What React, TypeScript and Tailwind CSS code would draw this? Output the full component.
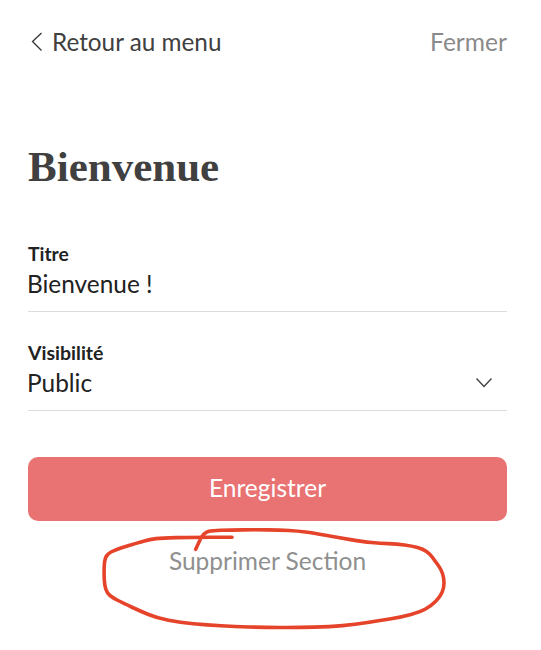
const scribble: [number, number][] = [
  [195.7, 549.3], [199, 542], [202, 536], [206, 532], [212, 530.5], [230, 530], [255, 529.7], [280, 530], [298, 531],
  [313, 533], [338, 537.5], [363, 541.7], [380, 543.2], [397, 544], [412, 546], [423, 549], [430, 554], [435, 561],
  [441, 569], [444, 578], [444, 588], [440, 597], [431, 606], [420, 612], [402, 617], [380, 620.5], [355, 624.5], [330, 626.7],
  [297, 627.6], [263, 627.4], [235, 626.5], [207, 625], [180, 622.5], [157, 618], [140, 611], [123, 603], [113, 598],
  [107, 593], [104.5, 585], [104, 573], [104.3, 561], [107, 554], [116, 549.5], [137, 543], [150, 539.5], [162, 537.8],
  [190, 537.4], [232, 537.2],
];

function smooth(points: [number, number][]) {
  let d = `M${points[0][0]} ${points[0][1]}`;
  for (let i = 1; i < points.length - 1; i++) {
    const [x, y] = points[i];
    const [nx, ny] = points[i + 1];
    d += ` Q${x} ${y} ${(x + nx) / 2} ${(y + ny) / 2}`;
  }
  const last = points[points.length - 1];
  return d + ` L${last[0]} ${last[1]}`;
}

export default function App() {
  return (
    <div className="relative w-[541px] h-[650px] overflow-hidden bg-white font-['Lato',sans-serif]">
      <div className="pl-7 pr-[34px] pt-[27px]">
        <div className="flex items-center justify-between h-[30px]">
          <div className="flex items-center">
            <svg width="14" height="20" viewBox="0 0 14 20" fill="none" className="ml-[2px] mr-[8px]">
              <path d="M11.5 1 L2.5 9.5 L11.5 18.5" stroke="#333" strokeWidth="1.3" />
            </svg>
            <span className="text-[24.3px] leading-[30px] text-[#404040]">Retour au menu</span>
          </div>
          <span className="text-[24.6px] leading-[30px] text-[#8a8a8a]">Fermer</span>
        </div>
        <h1 className="mt-[86px] text-[43px] leading-[48px] font-bold text-[#404040] font-['Liberation_Serif',serif]">Bienvenue</h1>
        <div className="mt-[51px] border-b border-[#dcdcdc] h-[70px]">
          <div className="text-[19.3px] leading-[24px] font-bold text-[#222]">Titre</div>
          <div className="text-[24.4px] leading-[30px] text-[#222] mt-[3px] -ml-px">Bienvenue !</div>
        </div>
        <div className="mt-[29px] border-b border-[#dcdcdc] h-[70px]">
          <div className="text-[19.5px] leading-[24px] font-bold text-[#222]">Visibilité</div>
          <div className="flex items-center justify-between mt-[3px]">
            <div className="text-[24.4px] leading-[30px] text-[#222] -ml-px">Public</div>
            <svg width="18" height="12" viewBox="0 0 18 12" fill="none" className="mr-[14px]">
              <path d="M1.5 1.5 L9 9.5 L16.5 1.5" stroke="#444" strokeWidth="1.4" />
            </svg>
          </div>
        </div>
        <button className="mt-[46px] w-full h-[64px] pb-[2px] rounded-[10px] bg-[#e97272] text-white text-[24.5px]">Enregistrer</button>
        <div className="mt-[25px] text-center text-[24.5px] leading-[30px] text-[#8f8f8f]">Supprimer Section</div>
      </div>
      <svg className="absolute left-0 top-0" width="541" height="650" viewBox="0 0 541 650" fill="none">
        <path d={smooth(scribble)} stroke="#e5432a" strokeWidth="3.6" strokeLinecap="round" strokeLinejoin="round" />
      </svg>
    </div>
  );
}
